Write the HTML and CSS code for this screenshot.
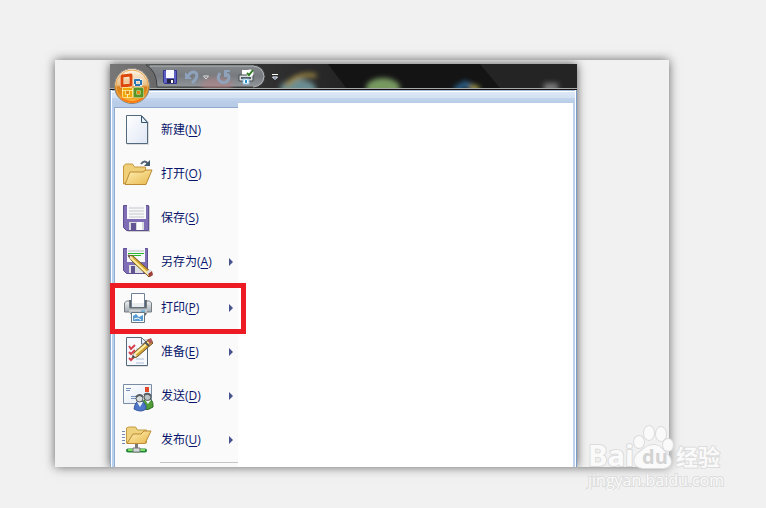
FILE: index.html
```html
<!DOCTYPE html>
<html lang="zh-CN">
<head>
<meta charset="utf-8">
<title>打印</title>
<link rel="stylesheet" href="styles.css">
</head>
<body>
<main class="sheet">
  <section class="window">
    <header class="titlebar">
      <svg class="backdrop" viewBox="0 0 467 24" preserveAspectRatio="none" aria-hidden="true">
        <defs>
          <filter id="soft" x="-50%" y="-50%" width="200%" height="200%"><feGaussianBlur stdDeviation="2.5"/></filter>
          <linearGradient id="glass" x1="0" x2="1"><stop offset="0" stop-color="#777"/><stop offset=".2" stop-color="#686868"/><stop offset=".6" stop-color="#333"/><stop offset="1" stop-color="#242424"/></linearGradient>
          <linearGradient id="pill" x2="0" y2="1"><stop offset="0" stop-color="#85898c"/><stop offset=".5" stop-color="#777b7f"/><stop offset="1" stop-color="#92979c"/></linearGradient>
        </defs>
        <rect width="467" height="24" fill="#141414"/>
        <path d="M0 0H218L236 24H0z" fill="url(#glass)"/>
        <path d="M370 0H467V24H390z" fill="#242424"/>
        <g filter="url(#soft)">
          <ellipse cx="188" cy="25" rx="18" ry="10" fill="#6b8d92"/>
          <path d="M176 22Q188 8 206 12" fill="none" stroke="#a18b43" stroke-width="4"/>
          <ellipse cx="273" cy="24" rx="17" ry="10" fill="#779960"/>
          <path d="M345 26l10-6 14 6" fill="none" stroke="#2a628b" stroke-width="6"/>
          <path d="M360 23l9 2" stroke="#a89c38" stroke-width="5"/>
          <rect x="434" y="19" width="14" height="9" fill="#777"/>
        </g>
        <path d="M36 1H143Q154 2 155 12.500Q154 23 143 23H47Q47 7 36 1z" fill="url(#pill)" stroke="#3f4041"/>
        <path d="M40 2H143Q153 3 154 12.500Q153 22 143 23" fill="none" stroke="#b2b5b7"/>
        <ellipse cx="107" cy="21" rx="16" ry="8" fill="#b87f82" opacity=".5" filter="url(#soft)"/>
      </svg>
      <button class="orb" aria-label="Office">
        <svg viewBox="0 0 38 38" aria-hidden="true">
          <defs><linearGradient id="orange" x2="0" y2="1"><stop offset="0" stop-color="#fffaf0"/><stop offset=".47" stop-color="#eabf88"/><stop offset=".53" stop-color="#d8811d"/><stop offset=".78" stop-color="#ee8d12"/><stop offset="1" stop-color="#ffd25c"/></linearGradient></defs>
          <circle cx="19" cy="19" r="17.500" fill="url(#orange)" stroke="#87847f"/>
          <circle cx="19" cy="19" r="16" fill="none" stroke="#e9a850"/>
          <path d="M8 31q11 8 22 0" fill="none" stroke="#ff7a13" stroke-width="2"/>
          <g fill="none" stroke-linejoin="round">
            <path d="M9 9l9-1v10l-9 1z" stroke="#fff4dc" stroke-width="4"/><path d="M9 9l9-1v10l-9 1z" stroke="#dc480c" stroke-width="3"/>
            <path d="M22 13h6v5h-6z" stroke="#edf6fb" stroke-width="3"/><path d="M22 13h6v5h-6z" stroke="#2876b5" stroke-width="2" stroke-dasharray="5 1"/>
            <path d="M11 22h7v7h-7z" stroke="#fff0a6" stroke-width="4"/><path d="M11 22h7v7h-7z" stroke="#efa70c" stroke-width="2.500" stroke-dasharray="8 1"/>
            <path d="M22 22h7v7h-7z" stroke="#f8eeb5" stroke-width="4"/><path d="M22 22h7v7h-7z" stroke="#579325" stroke-width="3"/>
          </g>
        </svg>
      </button>
      <nav class="quick" aria-label="快速访问工具栏">
        <button class="tool" aria-label="保存"><svg viewBox="0 0 16 16"><path d="M1.500 1.500h13v13h-12l-1-1z" fill="#5f60c4" stroke="#34348d"/><path d="M4 1h8v8H4z" fill="#f8faff"/><path d="M5 10h7v4H5z" fill="#242442"/><path d="M9 11h2v3H9z" fill="#fff"/></svg></button>
        <button class="tool" aria-label="撤消"><svg viewBox="0 0 16 16"><path d="M4 7Q8 1 12 4Q15 8 8 14" fill="none" stroke="#8fa2bc" stroke-width="3"/><path d="M1 3v7h7z" fill="#8fa2bc"/></svg></button>
        <button class="tool small" aria-label="撤消列表"><svg viewBox="0 0 8 16"><path d="M1.500 7h5L4 10z" fill="#777" stroke="#ddd"/></svg></button>
        <button class="tool" aria-label="恢复"><svg viewBox="0 0 16 16"><path d="M4 4Q0 10 5 13Q11 15 13 9Q13 6 11 5" fill="none" stroke="#8fa2bc" stroke-width="3"/><path d="M8 1h6v2h-3v5H8z" fill="#8fa2bc"/></svg></button>
        <button class="tool" aria-label="快速打印"><svg viewBox="0 0 16 16"><path d="M4 1h8v6H4z" fill="#fff"/><path d="M1 6h14v6H1z" fill="#d9dddf" stroke="#444b50"/><path d="M3 8h10v2H3z" fill="#555e65"/><path d="M5 10h6v5H5z" fill="#fff" stroke="#8fbedd"/><path d="M7 11h2v3H7z" fill="#2794d1"/><circle cx="12" cy="4" r="3.500" fill="#fff"/><path d="M9 4l2 2 4-5" fill="none" stroke="#327d25" stroke-width="2"/></svg></button>
        <button class="tool more" aria-label="自定义"><svg viewBox="0 0 8 16"><path d="M1 5.500h6" stroke="#fff"/><path d="M1.500 8h5L4 10.500z" fill="#2c4e91" stroke="#fff"/></svg></button>
      </nav>
    </header>
    <div class="frame">
      <div class="strip"></div>
      <div class="content">
        <nav class="menu" aria-label="Office 菜单">
          <button class="item">
            <svg viewBox="0 0 32 32"><defs><linearGradient id="paper" x2="1" y2="1"><stop offset="0" stop-color="#fff"/><stop offset="1" stop-color="#dfe7f5"/></linearGradient></defs><path d="M5 2h16l6 6v23H5z" fill="#ddd"/><path d="M4.500 1.500h15l6 7v21h-21z" fill="url(#paper)" stroke="#55697d"/><path d="M19.500 2v6.500h6z" fill="#e7f0f8" stroke="#36536e"/></svg>
            <span>新建(<u>N</u>)</span>
          </button>
          <button class="item">
            <svg viewBox="0 0 32 32"><defs><linearGradient id="folder" x2="1" y2="1"><stop offset="0" stop-color="#fff0b5"/><stop offset="1" stop-color="#e8b84c"/></linearGradient></defs><path d="M1.500 26V8l2-2h7l2 3h11v16H3z" fill="#efd079" stroke="#c7973d"/><path d="M3 26.500L8 14h13l3-2h6L24 26.500z" fill="url(#folder)" stroke="#bd8b34"/><path d="M19 6q4-5 7 0" fill="none" stroke="#526577" stroke-width="2"/><path d="M28 2v6h-6z" fill="#425a6c"/></svg>
            <span>打开(<u>O</u>)</span>
          </button>
          <button class="item">
            <svg viewBox="0 0 32 32"><path d="M2 4h26v26H6l-4-4z" fill="#ccc"/><path d="M1.500 3.500h25v25h-22l-3-3z" fill="#7f6eb5" stroke="#5d4f90"/><path d="M5 3h19v14H5z" fill="#f7f8fb"/><path d="M7 6h15M7 9h15M7 12h15M7 15h15" stroke="#c8c8ca"/><path d="M7 20h15v8H7z" fill="#d9dcde"/><path d="M9 21h5v7H9z" fill="#645692"/><path d="M15 20h5v8h-5z" fill="#fff"/></svg>
            <span>保存(<u>S</u>)</span>
          </button>
          <button class="item">
            <svg viewBox="0 0 32 32"><path d="M1.500 2.500h24v25h-21l-3-3z" fill="#7f6eb5" stroke="#5d4f90"/><path d="M5 2h18v14H5z" fill="#f7f8fb"/><path d="M6 5h16" stroke="#bbb"/><path d="M6 7.500h16M6 9.500h13" stroke="#28b528"/><path d="M7 19h14v8H7z" fill="#dedfe2"/><path d="M9 20h4v7H9z" fill="#61548f"/><path d="M6 9l5 1 19 17-3 4L9 14z" fill="#d6a52f" stroke="#705121"/><path d="M9 12l18 17" stroke="#ffed9d" stroke-width="2"/><path d="M6 9l5 2-2 3z" fill="#ffe0b0"/><path d="M6 9l2 1-1 2z" fill="#333"/><path d="M24 26l4-3 2 2-4 4z" fill="#dedede"/><path d="M26 28l4-3 1 4-3 2z" fill="#9f4038"/></svg>
            <span>另存为(<u>A</u>)</span><i class="arrow"></i>
          </button>
          <button class="item print">
            <svg viewBox="0 0 32 32"><defs><linearGradient id="metal" x2="0" y2="1"><stop offset="0" stop-color="#f0f2f3"/><stop offset="1" stop-color="#a2aab0"/></linearGradient></defs><path d="M9.500 1.500h13v14h-13z" fill="#fff" stroke="#728296"/><path d="M7 8h2v7h14V8h2v9H7z" fill="#596067"/><path d="M2.500 20V11l2-2h3v7h17V9h3l2 2v9z" fill="url(#metal)" stroke="#747d84"/><path d="M10 11h12v4H10z" fill="#e9edf0"/><path d="M7 19h18" stroke="#eee"/><path d="M8 21h17l-2 3H10z" fill="#575d62"/><path d="M9.500 20.500h13v10h-13z" fill="#f7fcff" stroke="#687681"/><path d="M11 29v-5l3-2 3 3 4-2v6z" fill="#589bd3"/><path d="M19 19h4" stroke="#2c9ee9"/><path d="M12 27l4-1 3 2" fill="none" stroke="#fff"/></svg>
            <span>打印(<u>P</u>)</span><i class="arrow"></i>
          </button>
          <button class="item">
            <svg viewBox="0 0 32 32"><path d="M5 3h21v28H5z" fill="#ddd"/><path d="M4.500 1.500h15l6 6v22h-21z" fill="#f8f9ff" stroke="#55697d"/><path d="M19.500 2v6h6" fill="#e4ebf6" stroke="#60758b"/><path d="M7 10l2 3 4-4M7 16l2 2 4-4M7 22l2 2 4-4" fill="none" stroke="#d43d49" stroke-width="2"/><path d="M14 13h9M14 23h8M14 27h8" stroke="#aebbd0"/><path d="M10 22l2-5L27 3l4 4-16 14z" fill="#d5a334" stroke="#6c552d"/><path d="M13 18L27 6" stroke="#fff2a6" stroke-width="2"/><path d="M10 22l2-5 3 3z" fill="#eee"/><path d="M10 22l1-3 2 2z" fill="#333"/><path d="M25 4l3 4 3-2-2-4z" fill="#b25a55"/><path d="M23 6l4 4" stroke="#505457" stroke-width="2"/></svg>
            <span>准备(<u>E</u>)</span><i class="arrow"></i>
          </button>
          <button class="item">
            <svg viewBox="0 0 32 32"><path d="M1.500 4.500h28v19h-28z" fill="url(#paper)" stroke="#788da3"/><path d="M4 8.500h5M4 10.500h4M9 16.500h10M9 18.500h8" stroke="#7590bd"/><path d="M23 7h4v5h-4z" fill="#e34726"/><path d="M21 30l-1-6q1-5 6-5t5 6v2q-5 4-10 2z" fill="#4f9e38" stroke="#2f6b27"/><path d="M12 29l1-4q1-4 5-4t6 5v3q-5 4-12 0z" fill="#4e76c8" stroke="#32559c"/><path d="M15 22l3 5 3-5zM23 20l3 4 3-4z" fill="#eef5fa"/><circle cx="25.500" cy="17" r="3.500" fill="#b9c3c5" stroke="#555"/><circle cx="17.500" cy="18.500" r="3.500" fill="#d6dddc" stroke="#555"/><path d="M14 17q4-4 7 0M22 15q4-3 7 1" fill="none" stroke="#565c60" stroke-width="2"/></svg>
            <span>发送(<u>D</u>)</span><i class="arrow"></i>
          </button>
          <button class="item">
            <svg viewBox="0 0 32 32"><path d="M0 7.500h3M0 10.500h3M0 13.500h3M0 16.500h3M0 19.500h3" stroke="#7588ad"/><path d="M4.500 19V4l2-1h7l2 3h9v13z" fill="#efd27e" stroke="#c39a42"/><path d="M5 19.500L11 10h8l3-3h7l-6 12.500z" fill="url(#folder)" stroke="#bd8b34"/><path d="M14.500 20v5" stroke="#777" stroke-width="3"/><path d="M6 26.500h17" stroke="#25833a" stroke-width="4" stroke-linecap="round"/><path d="M6 26h17" stroke="#7cdf65" stroke-width="2"/><path d="M11 24h7v4h-7z" fill="#d4dada" stroke="#777"/></svg>
            <span>发布(<u>U</u>)</span><i class="arrow"></i>
          </button>
          <hr>
        </nav>
        <div class="blank"></div>
      </div>
    </div>
  </section>
</main>
<svg class="watermark" viewBox="0 0 144 70" role="img" aria-label="Baidu 经验">
  <g class="outlined">
    <text class="latin" x="4" y="46">Bai</text>
    <path d="M70 25c6 0 9 5 13 9 6 6 5 13-3 14H59c-9-1-11-7-6-14 6-4 9-9 17-9z"/>
    <ellipse cx="55" cy="22" rx="5" ry="6"/><ellipse cx="65" cy="13" rx="5" ry="7"/><ellipse cx="77" cy="14" rx="5" ry="7"/><ellipse cx="84" cy="25" rx="5" ry="6"/>
    <text class="han" x="92" y="45">经验</text>
    <text class="url" x="4" y="66">jingyan.baidu.com</text>
  </g>
  <text class="du" x="58" y="44">du</text>
</svg>
</body>
</html>
```
FILE: styles.css
```css
*, *::after { box-sizing: border-box; }

body {
  position: relative;
  min-height: 100vh;
  margin: 0;
  padding: 60px 97px 41px 55px;
  background: #f1f1f1;
  font: 12px/18px "Open Sans", "Noto Sans CJK SC", sans-serif;
}

button {
  margin: 0;
  padding: 0;
  border: 0;
  background: none;
  font: inherit;
  color: inherit;
}

svg { display: block; }

.sheet {
  padding: 4px 92px 0 55px;
  overflow: hidden;
  background: #f1f1f1;
  box-shadow: 0 0 10px #666;
}

.window {
  background: #fff;
  box-shadow: 0 0 9px #555;
}

.titlebar {
  position: relative;
  height: 26px;
  border-bottom: 1px solid #111;
  background: #aaa;
}

.backdrop {
  width: 100%;
  height: 24px;
}

.orb {
  position: absolute;
  z-index: 1;
  top: 3px;
  left: 3px;
  width: 38px;
  height: 38px;
}

.quick {
  position: absolute;
  top: 5px;
  left: 52px;
  display: flex;
  gap: 6px;
}

.tool { width: 16px; }
.tool.small { width: 8px; margin-left: -4px; }
.tool.more { width: 8px; margin-left: 11px; }

.frame {
  padding: 0 1px;
  border-right: 1px solid #7c9cc9;
  border-left: 1px solid #8daad0;
  background: #fff;
}

.strip {
  height: 13px;
  border-top: 1px solid #a3badb;
  background: linear-gradient(#fff 1px, #dce8f6 1px, #d3e1f2 7px, #c3d5ed 7px, #b8cce8);
}

.content {
  display: flex;
  border-right: 2px solid #bdd0ec;
}

.menu {
  width: 126px;
  padding-top: 4px;
  border-left: 2px solid #b8cfed;
  background: linear-gradient(#b8cce8 4px, #fafafa 4px);
  color: #08156b;
}

.item {
  display: flex;
  align-items: center;
  width: 100%;
  height: 44px;
  padding-left: 7px;
  border-left: 1px solid #94acd0;
  text-align: left;
}

.item:first-child {
  height: 45px;
  border-top: 1px solid #8fa8cc;
}

.item svg {
  flex: none;
  width: 32px;
  height: 32px;
  margin-right: 7px;
}

.item span { flex: 1; }

.arrow {
  width: 4px;
  height: 8px;
  margin-right: 5px;
  background: #46538c;
  clip-path: polygon(0 0, 100% 50%, 0 100%);
}

u { text-underline-offset: 2px; }

.item.print {
  position: relative;
  height: 46px;
  padding-top: 2px;
}

.print::after {
  position: absolute;
  top: -1px;
  left: -5px;
  width: 136px;
  height: 51px;
  border: 5px solid #ed1c24;
  content: "";
}

.menu hr {
  height: 5px;
  margin: 0;
  border: 0;
  border-left: 1px solid #94acd0;
  background: linear-gradient(#c5c5c5, #c5c5c5) 45px 0 / 100% 1px no-repeat;
}

.blank {
  flex: 1;
  background: #fff;
}

.watermark {
  position: absolute;
  top: 420px;
  right: 38px;
  width: 144px;
  height: 70px;
}

.outlined {
  fill: #fafafa;
  stroke: #dcdcdc;
  stroke-width: 2px;
  paint-order: stroke;
}

.latin { font: bold 29px "Open Sans", sans-serif; }
.han { font: bold 22px "Noto Sans CJK SC", sans-serif; }
.url { font: 16px "Open Sans", sans-serif; }
.du { font: bold 20px "Open Sans", sans-serif; fill: #d3d3d3; }
```
